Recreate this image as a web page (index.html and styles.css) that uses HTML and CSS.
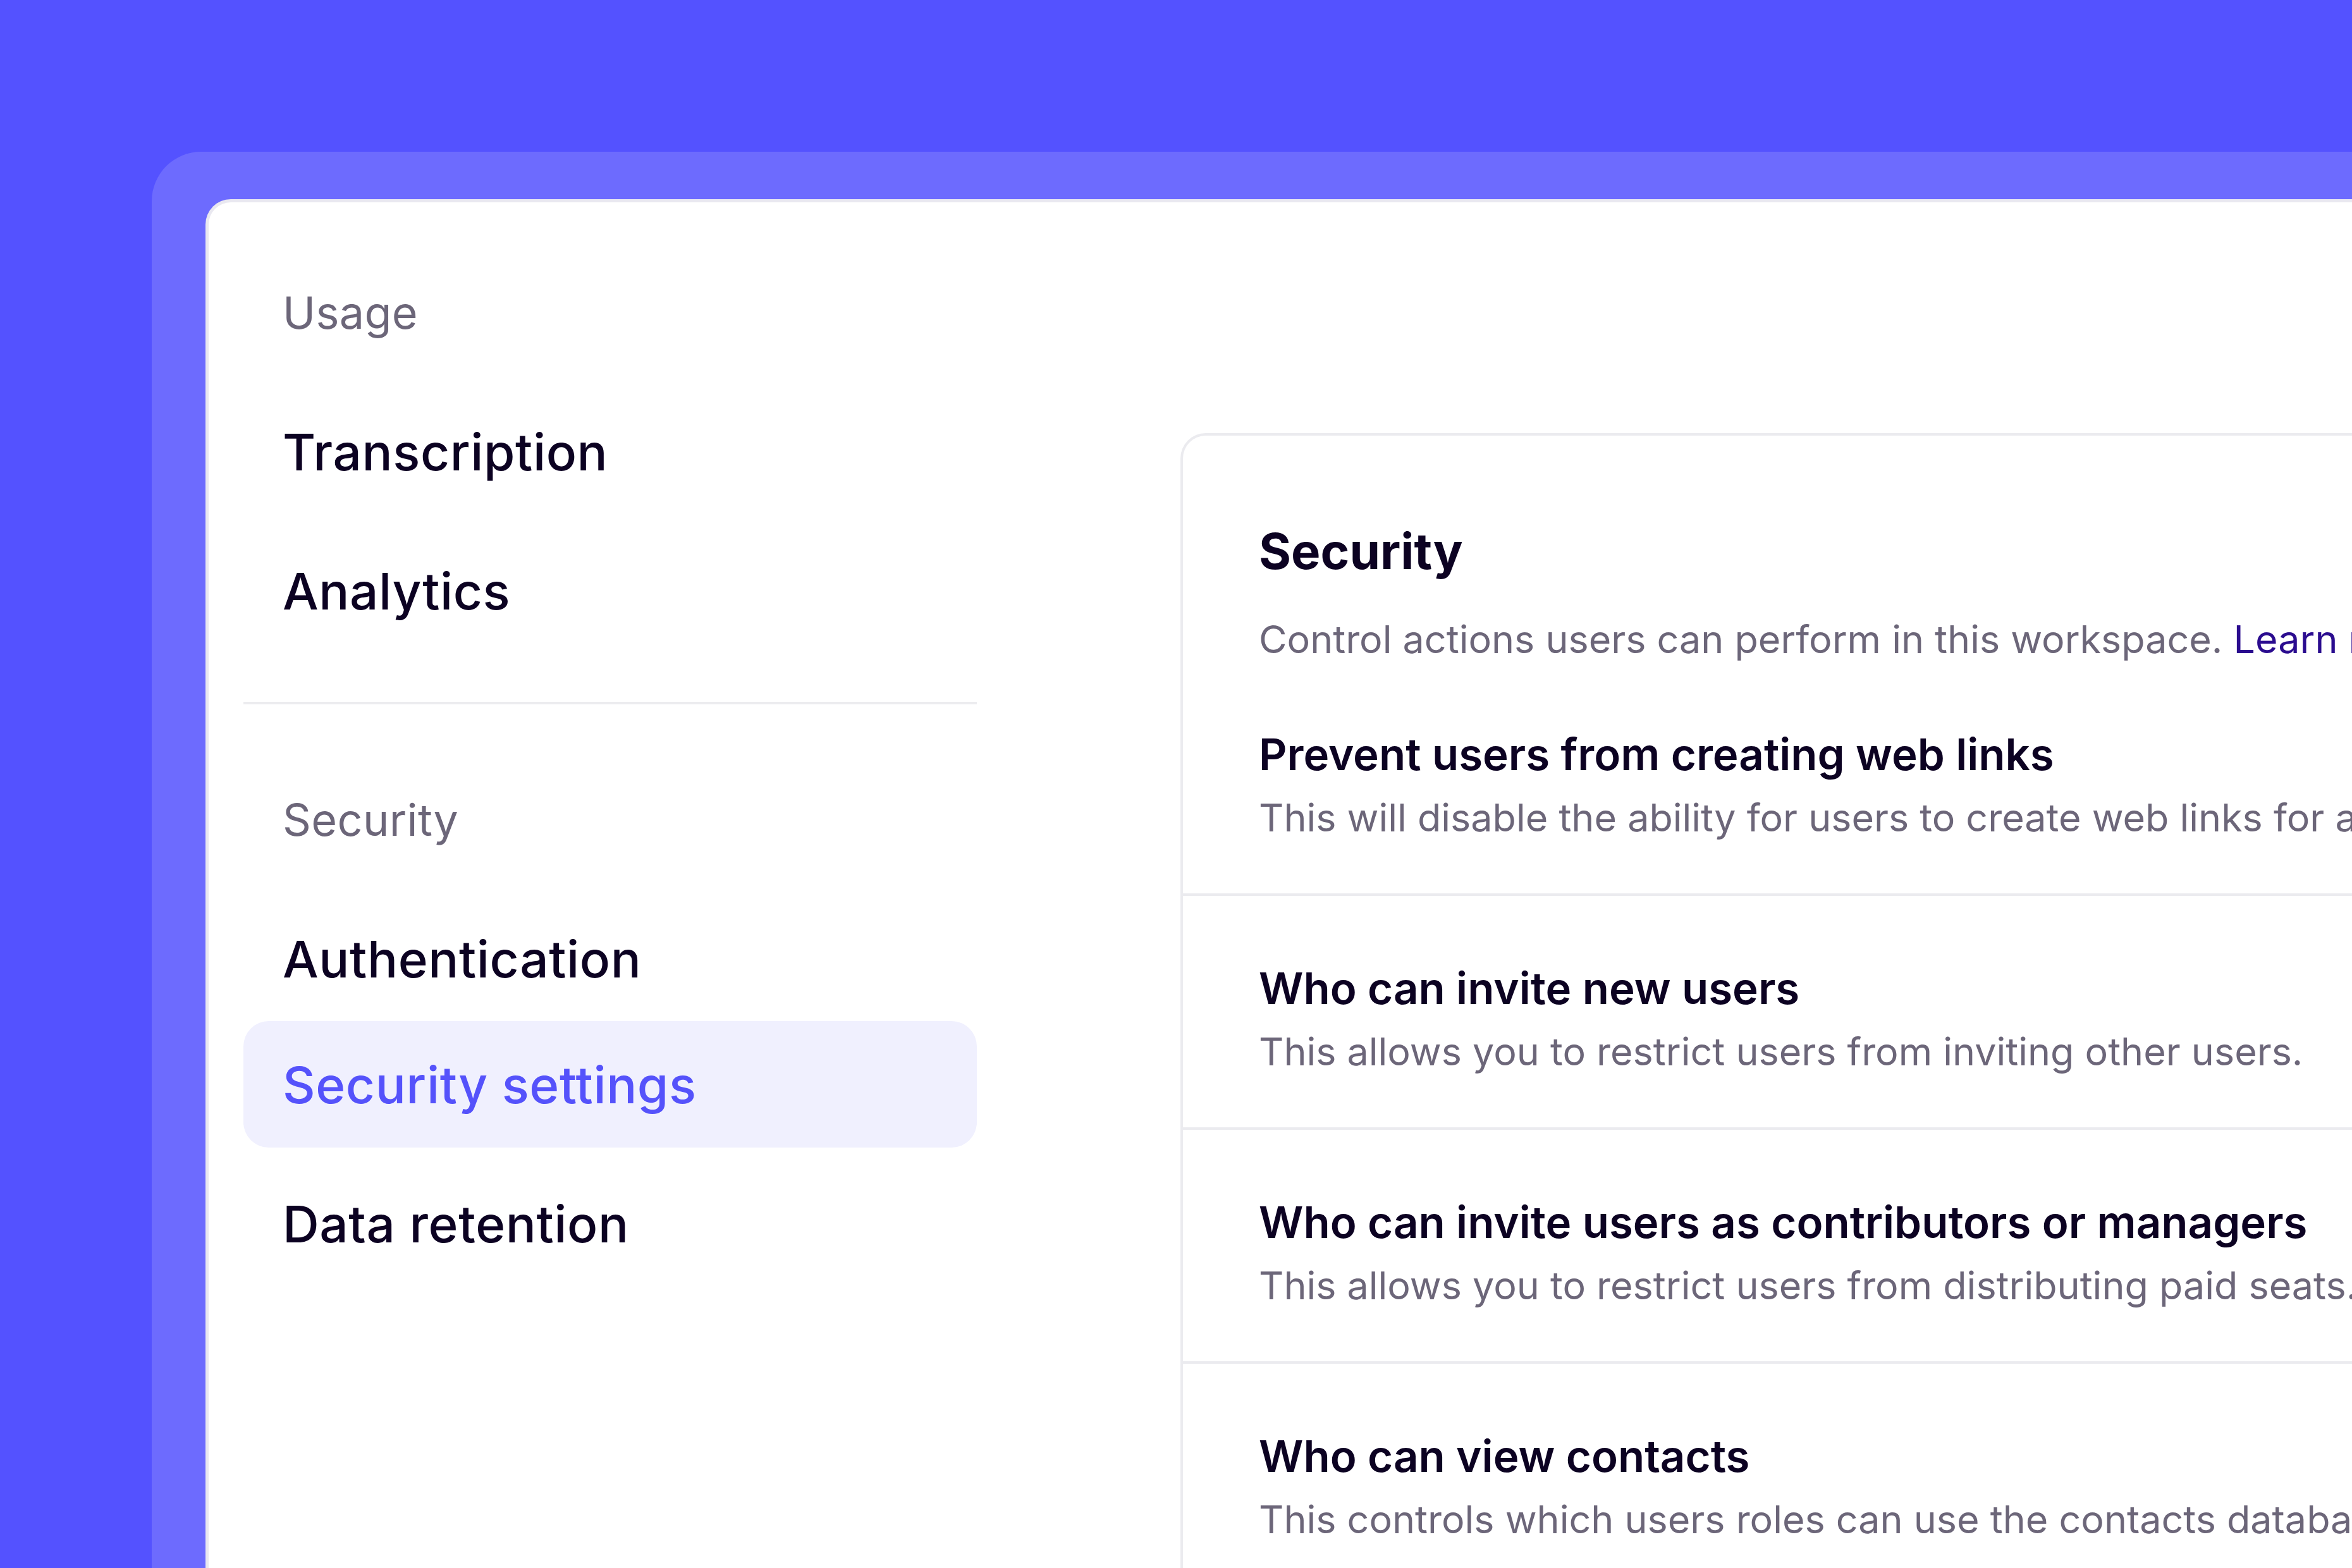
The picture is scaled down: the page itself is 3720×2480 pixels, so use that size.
FILE: index.html
```html
<!DOCTYPE html>
<html lang="en">
<head>
<meta charset="utf-8">
<title>Security settings</title>
<link rel="stylesheet" href="styles.css">
</head>
<body>
<div class="frame">
  <div class="panel">
    <nav class="sidebar">
      <div class="nav-label">Usage</div>
      <a class="nav-item">Transcription</a>
      <a class="nav-item">Analytics</a>
      <hr class="nav-divider">
      <div class="nav-label">Security</div>
      <a class="nav-item">Authentication</a>
      <a class="nav-item active">Security settings</a>
      <a class="nav-item">Data retention</a>
    </nav>
    <main class="main">
      <section class="card">
        <header class="card-header">
          <h1 class="card-title">Security</h1>
          <p class="card-desc">Control actions users can perform in this workspace. <a class="link">Learn more</a></p>
        </header>
        <div class="row">
          <h2 class="row-title">Prevent users from creating web links</h2>
          <p class="row-desc">This will disable the ability for users to create web links for any content in this workspace.</p>
        </div>
        <div class="row">
          <h2 class="row-title">Who can invite new users</h2>
          <p class="row-desc">This allows you to restrict users from inviting other users.</p>
        </div>
        <div class="row">
          <h2 class="row-title">Who can invite users as contributors or managers</h2>
          <p class="row-desc">This allows you to restrict users from distributing paid seats.</p>
        </div>
        <div class="row">
          <h2 class="row-title">Who can view contacts</h2>
          <p class="row-desc">This controls which users roles can use the contacts database.</p>
        </div>
      </section>
    </main>
  </div>
</div>
</body>
</html>
```

FILE: styles.css
```css
* { box-sizing: border-box; }

html, body {
  margin: 0;
  padding: 0;
}

body {
  width: 3720px;
  height: 2480px;
  overflow: hidden;
  background: #5452ff;
  font-family: Inter, "Noto Sans", "Liberation Sans", sans-serif;
  color: #0c0222;
}

.frame {
  margin: 240px 0 0 240px;
  width: 3700px;
  height: 2400px;
  background: #6d6bfe;
  border-radius: 78px 0 0 0;
  padding: 75px 0 0 85px;
}

.panel {
  display: flex;
  height: 100%;
  background: #ffffff;
  border-top: 5px solid #e9e8f0;
  border-left: 5px solid #e9e8f0;
  border-radius: 40px 0 0 0;
}

.sidebar {
  flex: 0 0 auto;
  width: 1215px;
  padding: 74px 0 0 55px;
  display: flex;
  flex-direction: column;
}

.nav-label,
.nav-item {
  display: flex;
  align-items: center;
  height: 200px;
  padding-left: 62px;
  border-radius: 40px;
}

.nav-label {
  font-size: 70px;
  font-weight: 400;
  letter-spacing: 0.4px;
  color: #6c6679;
  margin-bottom: 20px;
}

.nav-item {
  font-size: 80px;
  font-weight: 500;
  letter-spacing: 0.6px;
  color: #0c0222;
  margin-bottom: 20px;
}

.nav-item.active {
  margin-top: -21px;
  background: #f0f0fe;
  color: #5552fb;
}

.nav-divider {
  border: 0;
  height: 4px;
  background: #ececef;
  margin: 56px 0 82px 0;
}

.main {
  flex: 1 1 auto;
  padding: 365px 0 0 322px;
}

.card {
  height: 100%;
  border-top: 4px solid #ebebef;
  border-left: 4px solid #ebebef;
  border-radius: 40px 0 0 0;
}

.card-header {
  padding: 136px 0 0 120px;
}

.card-title {
  margin: 0;
  font-size: 78px;
  line-height: 94px;
  font-weight: 700;
  color: #0c0222;
}

.card-desc {
  margin: 56px 0 0 0;
  font-size: 61px;
  line-height: 72px;
  color: #6c6679;
  white-space: nowrap;
}

.link {
  color: #2b0c8f;
}

.row {
  padding: 110px 0 84px 120px;
  border-bottom: 4px solid #ebebef;
}

.row-title {
  margin: 0;
  font-size: 69px;
  line-height: 72px;
  font-weight: 600;
  color: #0c0222;
  white-space: nowrap;
}

.row-desc {
  margin: 28px 0 0 0;
  font-size: 61px;
  line-height: 72px;
  color: #6c6679;
  white-space: nowrap;
}
```
